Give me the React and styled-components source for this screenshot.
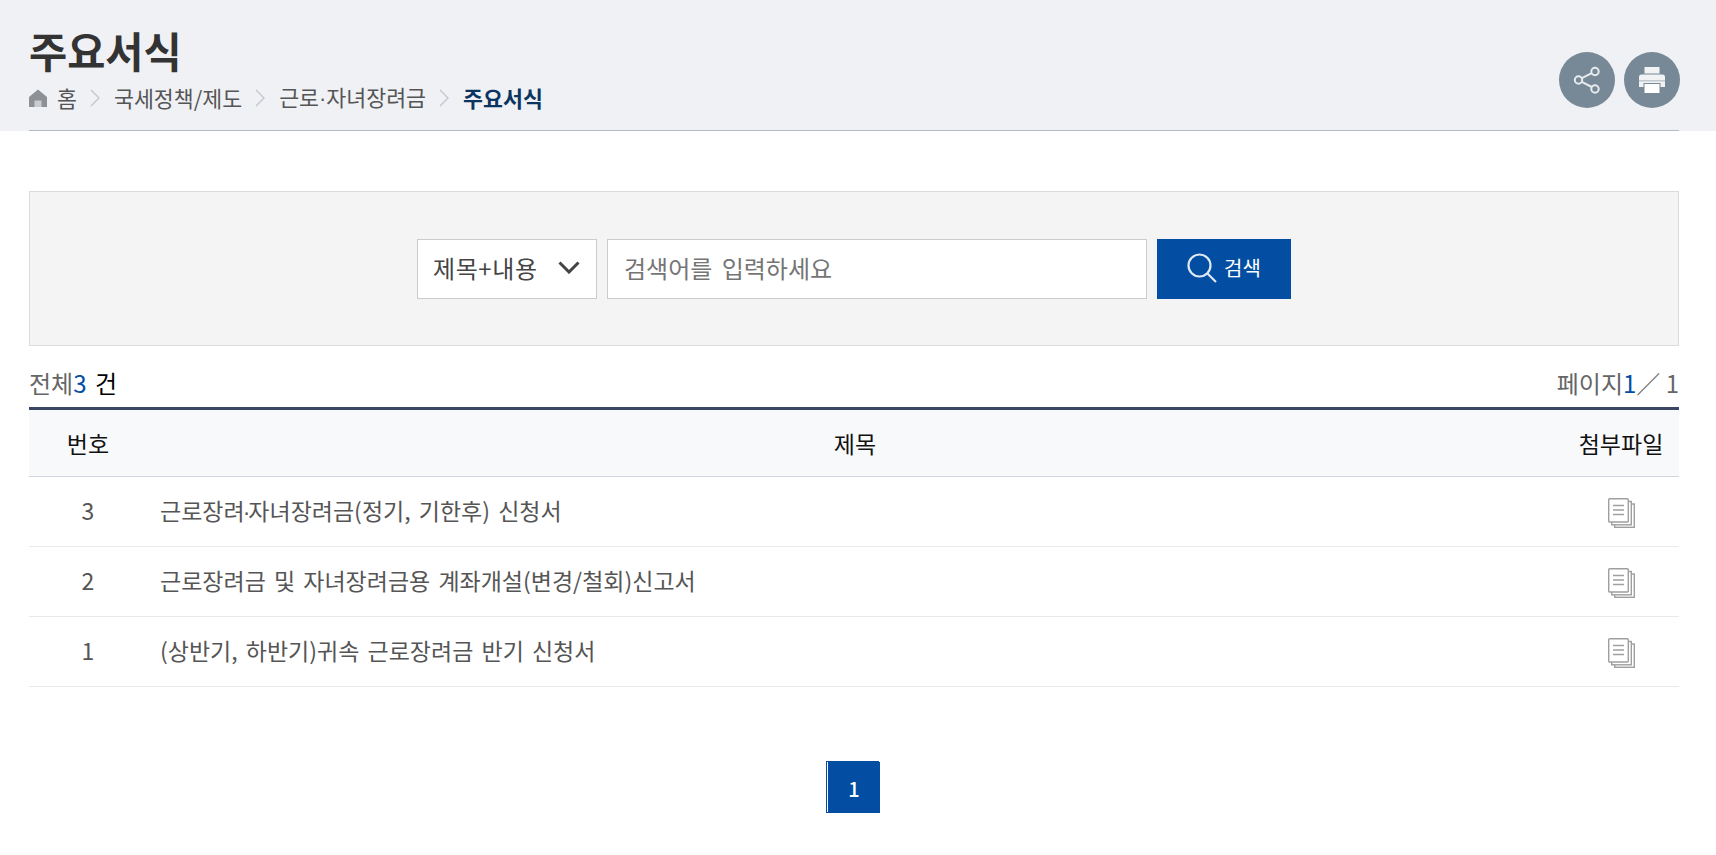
import React from "react";
import styled, { createGlobalStyle } from "styled-components";

const BLUE = "#034ea2";
const FONT = `"Noto Sans CJK KR", "Noto Sans", sans-serif`;

const Global = createGlobalStyle`
  html, body { margin: 0; background: #fff; font-family: ${FONT}; }
  * { box-sizing: border-box; }
`;

const HeadBand = styled.header`
  background: #f0f1f5;
  padding: 0 37px 0 29px;
`;
const HeadInner = styled.div`
  height: 131px;
  border-bottom: 1px solid #b5bbc6;
  display: flex;
  justify-content: space-between;
`;
const Title = styled.h1`
  margin: 0;
  padding-top: 23px;
  font-size: 41.500px;
  line-height: 55px;
  font-weight: 700;
  color: #333;
`;
const Crumbs = styled.nav`
  display: flex;
  align-items: center;
  height: 28px;
  margin-top: 6px;
  font-size: 21.700px;
  line-height: 28px;
  color: #555;
`;
const CrumbText = styled.span`
  color: ${p => (p.$current ? "#0b3561" : "#555")};
  font-weight: ${p => (p.$current ? 700 : 400)};
`;
const Dot = styled.span`
  font-family: "Liberation Sans", sans-serif;
  margin: 0 ${p => (p.$tight ? "-2px" : "0")};
`;
const Sep = styled.svg`
  width: 10px;
  height: 20px;
  margin: 0 14px 0 13px;
  flex: none;
`;
const HomeSvg = styled.svg`
  width: 18px;
  height: 18px;
  margin-right: 10px;
  flex: none;
`;
const Actions = styled.div`
  display: flex;
  gap: 9px;
  padding-top: 52px;
  margin-right: -1px;
`;
const Round = styled.button`
  width: 56px;
  height: 56px;
  border: 0;
  padding: 0;
  border-radius: 50%;
  background: #778896;
  display: flex;
  align-items: center;
  justify-content: center;
`;
const Main = styled.main`
  padding: 60px 37px 0 29px;
`;
const SearchPanel = styled.form`
  height: 155px;
  background: #f4f4f4;
  border: 1px solid #dcdcdc;
  display: flex;
  justify-content: center;
  align-items: center;
  gap: 10px;
`;
const SelectBox = styled.div`
  width: 180px;
  height: 60px;
  background: #fff;
  border: 1px solid #ccc;
  padding: 0 16px 2px 15px;
  display: flex;
  align-items: center;
  justify-content: space-between;
  font-size: 24px;
  letter-spacing: 0.600px;
  color: #444;
`;
const SearchInput = styled.input`
  width: 540px;
  height: 60px;
  background: #fff;
  border: 1px solid #ccc;
  padding: 0 16px 2px;
  font: 400 24px ${FONT};
  word-spacing: 4px;
  &::placeholder { color: #757575; opacity: 1; }
`;
const SearchButton = styled.button`
  width: 134px;
  height: 60px;
  border: 0;
  padding: 0 0 2px;
  background: ${BLUE};
  color: #fff;
  font: 400 20px ${FONT};
  display: flex;
  align-items: center;
  justify-content: center;
  gap: 7px;
`;
const Summary = styled.div`
  height: 61px;
  padding-top: 11px;
  display: flex;
  justify-content: space-between;
  align-items: center;
  font-size: 24px;
  color: #666;
`;
const Total = styled.span`
  word-spacing: 3px;
`;
const Strong = styled.span`
  color: ${p => p.$color};
`;
const Table = styled.table`
  width: 100%;
  border-collapse: collapse;
  table-layout: fixed;
  border-top: 3px solid #3a4666;
`;
const Th = styled.th`
  height: 68px;
  background: #f8f9fb;
  border-bottom: 1px solid #d0d5dc;
  font-size: 23px;
  font-weight: 400;
  color: #111;
  padding: 0;
  width: ${p => p.$w || "auto"};
`;
const Td = styled.td`
  height: 70px;
  border-bottom: 1px solid #e9e9e9;
  font-size: 23px;
  word-spacing: 3px;
  color: #555;
  text-align: ${p => p.$align || "center"};
  padding: ${p => (p.$align === "left" ? "0 0 4px 13px" : "0 0 4px")};
`;
const DocCell = styled.td`
  height: 70px;
  border-bottom: 1px solid #e9e9e9;
  padding: 2px 0 0;
`;
const DocSvg = styled.svg`
  display: block;
  margin: 1px auto 0;
`;
const Pager = styled.div`
  display: flex;
  justify-content: center;
  margin-top: 74px;
  padding-right: 3px;
`;
const PageButton = styled.a`
  position: relative;
  display: block;
  width: 53px;
  height: 52px;
  border: 1px solid ${BLUE};
  background: #fff;
  &::after {
    content: "1";
    position: absolute;
    left: 1px;
    top: 0;
    width: 52px;
    height: 53px;
    background: ${BLUE};
    color: #fff;
    font-size: 20px;
    font-weight: 500;
    line-height: 53px;
    text-align: center;
  }
`;

const Chevron = () => (
  <Sep viewBox="0 0 10 20"><path d="M1 2l8 8-8 8" fill="none" stroke="#c4c7cd" strokeWidth="1.4" /></Sep>
);

const Doc = () => (
  <DocSvg width="27" height="30" viewBox="0 0 27 30" fill="#fff" stroke="#9f9f9f" strokeWidth="1.4">
    <rect x="6.700" y="6" width="19.600" height="23.300" />
    <rect x="3.700" y="3.500" width="19.600" height="23.300" />
    <rect x="0.700" y="0.700" width="19.600" height="23.300" rx="1" />
    <path d="M5 7.500h11M5 12h11M5 16.500h11" fill="none" />
  </DocSvg>
);

const rows = [
  ["3", <>근로장려<Dot $tight>·</Dot>자녀장려금(정기, 기한후) 신청서</>],
  ["2", "근로장려금 및 자녀장려금용 계좌개설(변경/철회)신고서"],
  ["1", "(상반기, 하반기)귀속 근로장려금 반기 신청서"],
];

export default function App() {
  return (
    <>
      <Global />
      <HeadBand>
        <HeadInner>
          <div>
            <Title>주요서식</Title>
            <Crumbs>
              <HomeSvg viewBox="0 0 18 18">
                <path d="M9 0.500L0 8v10h18V8z" fill="#8d9094" />
                <path d="M5.500 11.500h7V18h-7z" fill="#c9ccd0" />
              </HomeSvg>
              <CrumbText>홈</CrumbText>
              <Chevron />
              <CrumbText>국세정책/제도</CrumbText>
              <Chevron />
              <CrumbText>근로<Dot>·</Dot>자녀장려금</CrumbText>
              <Chevron />
              <CrumbText $current>주요서식</CrumbText>
            </Crumbs>
          </div>
          <Actions>
            <Round aria-label="공유">
              <svg width="30" height="30" viewBox="0 0 30 30" fill="none" stroke="#e8ebee" strokeWidth="2">
                <circle cx="23" cy="6.500" r="3.700" />
                <circle cx="6.500" cy="15" r="3.700" />
                <circle cx="23" cy="24" r="3.700" />
                <path d="M9.800 13.200L19.800 8.200M9.800 16.800L19.800 22" />
              </svg>
            </Round>
            <Round aria-label="인쇄">
              <svg width="26" height="28" viewBox="0 0 26 28">
                <path d="M5.500 1h15v6.500h-15z" fill="#f0f2f4" />
                <path d="M2.500 8.500h21A2.500 2.500 0 0 1 26 11v10h-4.500v-4h-17v4H0V11A2.500 2.500 0 0 1 2.500 8.500z" fill="#f0f2f4" />
                <path d="M0 14h26v1.500H0z" fill="#c2cad1" />
                <path d="M5.500 18h15v9h-15z" fill="#fff" />
              </svg>
            </Round>
          </Actions>
        </HeadInner>
      </HeadBand>
      <Main>
        <SearchPanel>
          <SelectBox>
            제목+내용
            <svg width="22" height="13" viewBox="0 0 22 13"><path d="M1.500 1.500L11 11l9.500-9.500" fill="none" stroke="#444" strokeWidth="3" /></svg>
          </SelectBox>
          <SearchInput placeholder="검색어를 입력하세요" />
          <SearchButton type="button">
            <svg width="30" height="30" viewBox="0 0 30 30" fill="none" stroke="#dfe8f3" strokeWidth="2.200">
              <circle cx="12.500" cy="12.500" r="11" />
              <path d="M20.500 20.500L29 29" />
            </svg>
            검색
          </SearchButton>
        </SearchPanel>
        <Summary>
          <Total>전체<Strong $color={BLUE}>3</Strong> <Strong $color="#000">건</Strong></Total>
          <span>페이지<Strong $color={BLUE}>1</Strong>／ 1</span>
        </Summary>
        <Table>
          <thead>
            <tr>
              <Th $w="118px">번호</Th>
              <Th>제목</Th>
              <Th $w="116px">첨부파일</Th>
            </tr>
          </thead>
          <tbody>
            {rows.map(([n, t]) => (
              <tr key={n}>
                <Td>{n}</Td>
                <Td $align="left">{t}</Td>
                <DocCell><Doc /></DocCell>
              </tr>
            ))}
          </tbody>
        </Table>
        <Pager><PageButton /></Pager>
      </Main>
    </>
  );
}
